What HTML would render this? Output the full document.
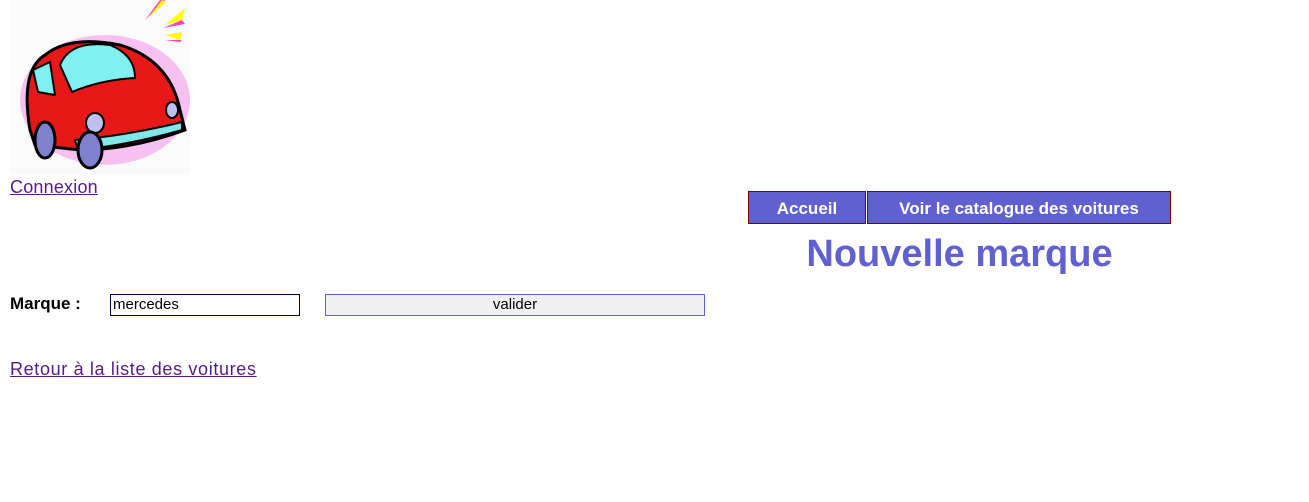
<!DOCTYPE html>
<html><head><meta charset="utf-8"><style>
body{margin:0;width:1309px;height:502px;background:#fff;font-family:"Liberation Sans",sans-serif;position:relative;overflow:hidden}
.lnk{color:#551a8b;text-decoration:underline}
.abs{position:absolute}
.nav{position:absolute;top:191px;height:33px;background:#6060d0;border:1px solid #800000;color:#fff;font-weight:bold;font-size:17px;line-height:33px;text-align:center;box-sizing:border-box}
</style></head><body>
<svg class="abs" style="left:10px;top:0" width="180" height="175" viewBox="0 0 180 175">
<rect width="180" height="175" fill="#fafafa"/>
<polygon points="135,20 150,0 155,0" fill="#ff40c0"/><polygon points="138,18 152,0 156,2" fill="#ffff00"/>
<polygon points="155,25 175,8 172,20" fill="#ffff00"/><polygon points="153,28 172,20 175,24" fill="#ff40c0"/>
<polygon points="155,35 172,32 170,40" fill="#ffff00"/><polygon points="155,40 172,40 170,42" fill="#ff40c0"/>
<ellipse cx="95" cy="100" rx="85" ry="65" fill="#f6c0f0"/>
<path d="M20,130 Q10,70 35,55 Q60,35 110,45 Q160,60 170,110 L175,130 Q120,150 70,150 L25,145 Z" fill="#e81818" stroke="#000" stroke-width="3"/>
<path d="M50,65 Q60,40 100,45 Q125,55 125,78 Q90,80 62,92 Z" fill="#80f0f0" stroke="#000" stroke-width="2"/>
<path d="M23,70 L40,62 L45,95 L28,92 Z" fill="#80f0f0" stroke="#000" stroke-width="2"/>
<path d="M65,140 Q120,135 172,122 L172,130 Q120,145 68,150 Z" fill="#80e8e8" stroke="#000" stroke-width="2"/>
<ellipse cx="85" cy="123" rx="9" ry="10" fill="#c0c0f0" stroke="#000" stroke-width="2"/>
<ellipse cx="162" cy="110" rx="6" ry="8" fill="#c0c0f0" stroke="#000" stroke-width="2"/>
<ellipse cx="35" cy="140" rx="10" ry="18" fill="#8080d0" stroke="#000" stroke-width="3"/>
<ellipse cx="80" cy="150" rx="12" ry="18" fill="#8080d0" stroke="#000" stroke-width="3"/>
</svg>
<span class="abs lnk" style="left:10px;top:177px;font-size:18px;letter-spacing:0.2px">Connexion</span>
<div class="nav" style="left:748px;width:118px">Accueil</div>
<div class="nav" style="left:867px;width:304px">Voir le catalogue des voitures</div>
<div class="abs" style="left:748px;width:423px;top:232px;text-align:center;color:#6060d0;font-weight:bold;font-size:38px;line-height:45px">Nouvelle marque</div>
<div class="abs" style="left:10px;top:294px;font-size:17px;font-weight:bold">Marque :</div>
<div class="abs" style="left:110px;top:294px;width:190px;height:22px;box-sizing:border-box;border:1px solid #000050;font-size:15px;line-height:20px;padding-left:2px">mercedes</div>
<div class="abs" style="left:325px;top:294px;width:380px;height:22px;box-sizing:border-box;border:1px solid #6060d0;background:#f0f0f0;font-size:15px;line-height:20px;text-align:center">valider</div>
<span class="abs lnk" style="left:10px;top:359px;font-size:18px;letter-spacing:0.65px">Retour à la liste des voitures</span>
</body></html>
